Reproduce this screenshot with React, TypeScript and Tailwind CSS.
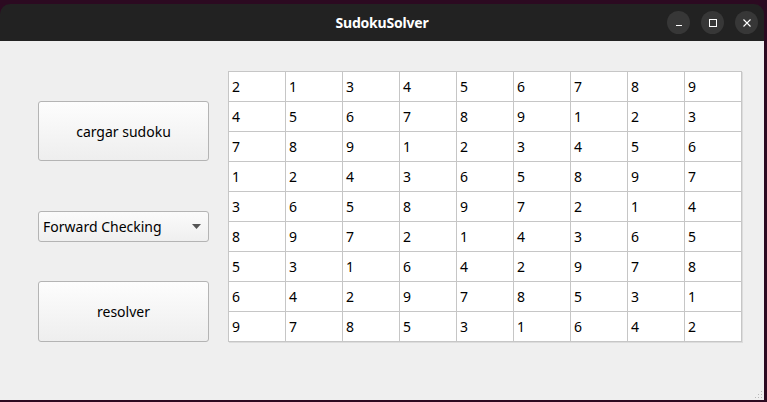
const board = [
  [2, 1, 3, 4, 5, 6, 7, 8, 9],
  [4, 5, 6, 7, 8, 9, 1, 2, 3],
  [7, 8, 9, 1, 2, 3, 4, 5, 6],
  [1, 2, 4, 3, 6, 5, 8, 9, 7],
  [3, 6, 5, 8, 9, 7, 2, 1, 4],
  [8, 9, 7, 2, 1, 4, 3, 6, 5],
  [5, 3, 1, 6, 4, 2, 9, 7, 8],
  [6, 4, 2, 9, 7, 8, 5, 3, 1],
  [9, 7, 8, 5, 3, 1, 6, 4, 2],
];

function TitleButton({ children }: { children: React.ReactNode }) {
  return (
    <div className="w-[23px] h-[23px] rounded-full bg-[#373737] flex items-center justify-center">
      {children}
    </div>
  );
}

export default function App() {
  return (
    <div
      className="w-[767px] h-[402px] bg-[#2c0a21] pt-[4px] overflow-hidden"
      style={{ fontFamily: '"Noto Sans", "DejaVu Sans", sans-serif' }}
    >
      <div className="w-[764px] h-[396px] flex flex-col rounded-t-[10px] overflow-hidden">
        {/* Title bar */}
        <div className="h-[37px] bg-[#222222] relative flex items-center justify-center shrink-0">
          <span className="text-white text-[14px] font-bold tracking-[-0.2px]">SudokuSolver</span>
          <div className="absolute right-[6px] top-[7px] flex gap-[11px]">
            <TitleButton>
              <svg width="10" height="10" viewBox="0 0 10 10">
                <line x1="2" y1="7.5" x2="8" y2="7.5" stroke="#fff" strokeWidth="1" />
              </svg>
            </TitleButton>
            <TitleButton>
              <svg width="10" height="10" viewBox="0 0 10 10">
                <rect x="1.5" y="1.5" width="7" height="7" fill="none" stroke="#fff" strokeWidth="1" />
              </svg>
            </TitleButton>
            <TitleButton>
              <svg width="10" height="10" viewBox="0 0 10 10">
                <path d="M1.5 1.5 L8.5 8.5 M8.5 1.5 L1.5 8.5" stroke="#fff" strokeWidth="1.1" />
              </svg>
            </TitleButton>
          </div>
        </div>

        {/* Content */}
        <div className="flex-1 bg-[#efefef] relative flex items-start pt-[30px] pl-[38px] gap-[19px] text-[14px] text-black">
          <div className="w-[171px] flex flex-col pt-[30px]">
            <button className="h-[60px] rounded-[3px] border border-[#b4b4b4] bg-gradient-to-b from-[#fdfdfd] to-[#eeeeee] flex items-center justify-center">
              cargar sudoku
            </button>
            <div className="mt-[50px] h-[31px] rounded-[3px] border border-[#b4b4b4] bg-gradient-to-b from-[#fbfbfb] to-[#efefef] flex items-center justify-between pl-[4px] pr-[7px]">
              <span>Forward Checking</span>
              <svg width="9" height="5" viewBox="0 0 9 5">
                <path d="M0 0 L9 0 L4.5 5 Z" fill="#555" />
              </svg>
            </div>
            <button className="mt-[39px] h-[61px] rounded-[3px] border border-[#b4b4b4] bg-gradient-to-b from-[#fdfdfd] to-[#eeeeee] flex items-center justify-center">
              resolver
            </button>
          </div>

          <div className="grid grid-cols-[repeat(9,56px)] gap-px p-px bg-[#c6c6c6] shadow-[1px_1px_0_#dcdcdc]">
            {board.flat().map((n, i) => (
              <div key={i} className="h-[29px] bg-white flex items-center pl-[3px] text-[14px]">
                {n}
              </div>
            ))}
          </div>

          {/* resize grip */}
          <div className="absolute right-[2px] bottom-[2px] grid grid-cols-3 gap-[2px]">
            {[0, 0, 1, 0, 1, 1, 1, 1, 1].map((v, i) => (
              <div key={i} className={v ? "w-[1px] h-[1px] bg-[#b8b8b8]" : "w-[1px] h-[1px]"} />
            ))}
          </div>
        </div>
      </div>
    </div>
  );
}
